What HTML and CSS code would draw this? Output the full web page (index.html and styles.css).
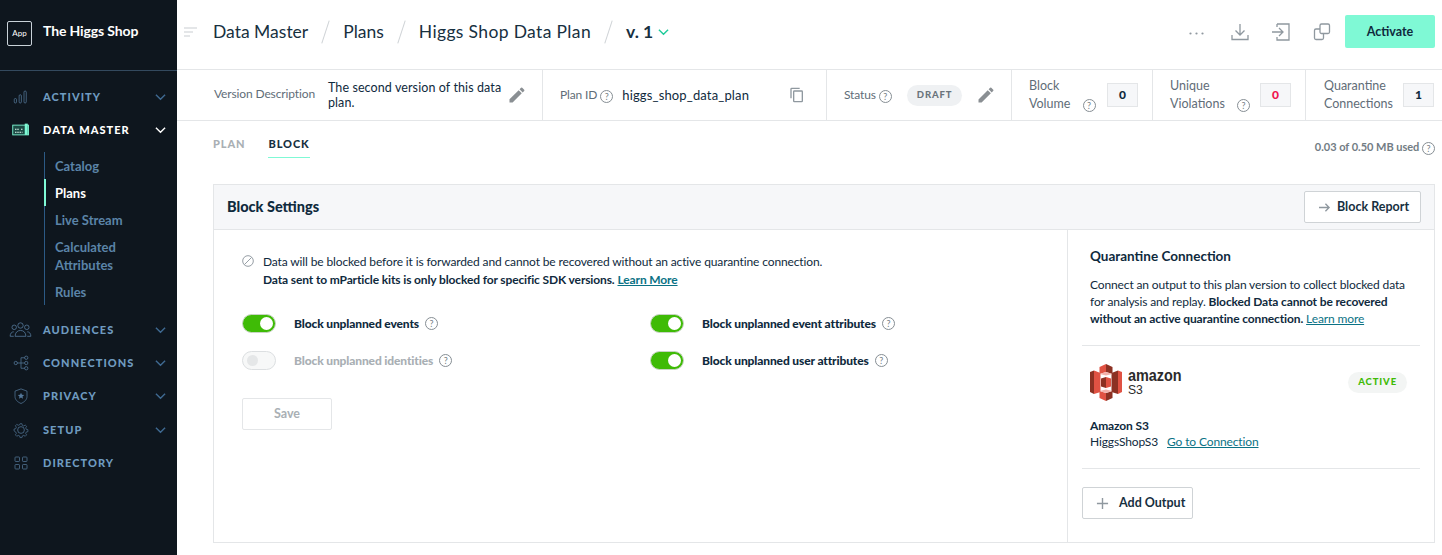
FILE: index.html
```html
<!DOCTYPE html>
<html lang="en">
<head>
    <meta charset="UTF-8">
    <meta name="viewport" content="width=device-width, initial-scale=1.0">
    <title>Higgs Shop Data Plan</title>
    <link rel="stylesheet" href="styles.css">
</head>
<body>
    <svg class="sprite" aria-hidden="true">
        <symbol id="pencil" viewBox="0 0 24 24"><path d="M3 17.25V21h3.75L17.81 9.94l-3.75-3.75L3 17.25zM20.71 7.04a1 1 0 0 0 0-1.41l-2.34-2.34a1 1 0 0 0-1.41 0l-1.83 1.83 3.75 3.75 1.83-1.83z" fill="currentColor"/></symbol>
        <symbol id="chevron" viewBox="0 0 12 8"><path d="M1 1.5l5 5 5-5" fill="none" stroke="currentColor" stroke-width="1.5"/></symbol>
    </svg>
    <div class="app">
        <aside class="sidebar">
            <div class="workspace">
                <span class="app-badge">App</span>
                <span class="workspace-name">The Higgs Shop</span>
            </div>
            <nav class="nav">
                <div class="nav-item">
                    <svg class="nav-icon" viewBox="0 0 24 24" fill="none" stroke="currentColor"><rect x="3" y="14" width="3" height="6" rx="1.5"/><rect x="9.5" y="9" width="3" height="11" rx="1.5"/><rect x="16" y="4" width="3" height="16" rx="1.5"/></svg>
                    <span class="nav-label">ACTIVITY</span>
                    <svg class="nav-chevron"><use href="#chevron"/></svg>
                </div>
                <div class="nav-item active">
                    <svg class="nav-icon" viewBox="0 0 24 24" fill="none"><rect x="1" y="5.5" width="21" height="13" fill="#1b4a44" stroke="#7ff9d5" stroke-width="1.2"/><rect x="17" y="3.5" width="4" height="15" fill="#7ff9d5"/><path d="M4 11h6M12 11h3M4 15h10" stroke="#e8fff8" stroke-width="1.6" stroke-dasharray="2 1"/></svg>
                    <span class="nav-label">DATA MASTER</span>
                    <svg class="nav-chevron"><use href="#chevron"/></svg>
                </div>
                <div class="subnav">
                    <span class="subnav-item">Catalog</span>
                    <span class="subnav-item current">Plans</span>
                    <span class="subnav-item">Live Stream</span>
                    <span class="subnav-item">Calculated Attributes</span>
                    <span class="subnav-item">Rules</span>
                </div>
                <div class="nav-item">
                    <svg class="nav-icon wide" viewBox="0 0 26 20" fill="none" stroke="currentColor" stroke-width=".9"><circle cx="13" cy="5" r="3"/><circle cx="6" cy="7" r="2.5"/><circle cx="20" cy="7" r="2.5"/><path d="M7 17c0-4 2.500-6.500 6-6.500s6 2.500 6 6.500zM5.500 17H1.500c0-3 1.500-5 4-5M20.500 17h4c0-3-1.500-5-4-5"/></svg>
                    <span class="nav-label">AUDIENCES</span>
                    <svg class="nav-chevron"><use href="#chevron"/></svg>
                </div>
                <div class="nav-item">
                    <svg class="nav-icon" viewBox="0 0 24 24" fill="none" stroke="currentColor"><circle cx="5" cy="12" r="2.200"/><circle cx="19" cy="5" r="2.200"/><circle cx="19" cy="12" r="2.200"/><circle cx="19" cy="19" r="2.200"/><path d="M7 12h10M12 5v14M12 5h5M12 19h5"/></svg>
                    <span class="nav-label">CONNECTIONS</span>
                    <svg class="nav-chevron"><use href="#chevron"/></svg>
                </div>
                <div class="nav-item">
                    <svg class="nav-icon" viewBox="0 0 24 24" fill="none" stroke="currentColor"><path d="M12 2.500l8 3v7c0 4.500-3.500 7.500-8 9.500-4.500-2-8-5-8-9.500v-7z"/><path d="M12 7.500l1.300 2.800 3 .3-2.300 2 .7 3-2.700-1.600-2.700 1.600.7-3-2.300-2 3-.3z" fill="currentColor" stroke="none"/></svg>
                    <span class="nav-label">PRIVACY</span>
                    <svg class="nav-chevron"><use href="#chevron"/></svg>
                </div>
                <div class="nav-item nav-setup">
                    <svg class="nav-icon" viewBox="0 0 24 24" fill="none" stroke="currentColor"><circle cx="12" cy="12" r="4.500"/><path d="M10.500 3h3l.5 2.500 2.200.9 2.200-1.400 2.100 2.100-1.400 2.200.9 2.200 2.500.5v3l-2.500.5-.9 2.200 1.400 2.200-2.100 2.100-2.200-1.400-2.200.9-.5 2.500h-3l-.5-2.500-2.200-.9-2.200 1.400-2.100-2.100 1.400-2.200-.9-2.200L1.500 14v-3l2.500-.5.900-2.200L3.500 6.100l2.100-2.100 2.200 1.400 2.200-.9z" transform="translate(12 12) scale(.88) translate(-12 -12.500)"/></svg>
                    <span class="nav-label">SETUP</span>
                    <svg class="nav-chevron"><use href="#chevron"/></svg>
                </div>
                <div class="nav-item">
                    <svg class="nav-icon" viewBox="0 0 24 24" fill="none" stroke="currentColor"><rect x="4" y="4" width="6" height="6" rx="1"/><rect x="14" y="4" width="6" height="6" rx="1"/><rect x="4" y="14" width="6" height="6" rx="1"/><rect x="14" y="14" width="6" height="6" rx="1"/></svg>
                    <span class="nav-label">DIRECTORY</span>
                </div>
            </nav>
        </aside>

        <main class="main">
            <header class="topbar">
                <svg class="menu-icon" viewBox="0 0 14 10" stroke="#c9ced2" stroke-width="1.200"><path d="M0 1h13M0 5h9M0 9h6"/></svg>
                <div class="crumbs">
                    <span>Data Master</span><i class="slash"></i>
                    <span>Plans</span><i class="slash"></i>
                    <span class="plan-name">Higgs Shop Data Plan</span><i class="slash"></i>
                    <span class="version">v. 1</span>
                    <svg class="version-chevron"><use href="#chevron"/></svg>
                </div>
                <div class="top-actions">
                    <svg class="dots" viewBox="0 0 15 3" fill="#8f989f"><circle cx="1.500" cy="1.500" r="1.100"/><circle cx="7.500" cy="1.500" r="1.100"/><circle cx="13.500" cy="1.500" r="1.100"/></svg>
                    <svg class="action-icon" viewBox="0 0 20 20" fill="none" stroke="#8f989f" stroke-width="1.300"><path d="M10 2v11M5.500 8.500L10 13l4.500-4.500M2 13v4.500h16V13"/></svg>
                    <svg class="action-icon" viewBox="0 0 20 20" fill="none" stroke="#8f989f" stroke-width="1.300"><path d="M1 10h11M8 6l4 4-4 4M6 2h12v16H6v-3M6 5V2"/></svg>
                    <svg class="action-icon last" viewBox="0 0 20 20" fill="none" stroke="#8f989f" stroke-width="1.300"><rect x="8" y="2" width="9.500" height="9.500" rx="1.500"/><path d="M8 7H4a1.500 1.500 0 0 0-1.500 1.500V16A1.500 1.500 0 0 0 4 17.500h6a1.500 1.500 0 0 0 1.500-1.500v-4.500"/></svg>
                    <button class="activate">Activate</button>
                </div>
            </header>

            <section class="info">
                <div class="cell cell-desc">
                    <span class="cell-label">Version Description</span>
                    <span class="cell-text">The second version of this data plan.</span>
                    <svg class="edit"><use href="#pencil"/></svg>
                </div>
                <div class="cell cell-id">
                    <span class="cell-label">Plan ID <i class="help">?</i></span>
                    <span class="cell-value">higgs_shop_data_plan</span>
                    <svg class="copy" viewBox="0 0 24 24" fill="#8f989f"><path d="M16 1H4a2 2 0 0 0-2 2v14h2V3h12V1zm3 4H8a2 2 0 0 0-2 2v14a2 2 0 0 0 2 2h11a2 2 0 0 0 2-2V7a2 2 0 0 0-2-2zm0 16H8V7h11v14z"/></svg>
                </div>
                <div class="cell cell-status">
                    <span class="cell-label">Status <i class="help">?</i></span>
                    <span class="pill">DRAFT</span>
                    <svg class="edit"><use href="#pencil"/></svg>
                </div>
                <div class="cell cell-stat">
                    <span class="stat-label">Block<br>Volume <i class="help">?</i></span>
                    <span class="count">0</span>
                </div>
                <div class="cell cell-stat">
                    <span class="stat-label">Unique<br>Violations <i class="help">?</i></span>
                    <span class="count red">0</span>
                </div>
                <div class="cell cell-stat">
                    <span class="stat-label">Quarantine<br>Connections</span>
                    <span class="count">1</span>
                </div>
            </section>

            <div class="content">
                <div class="tabs-row">
                    <div class="tabs">
                        <span class="tab">PLAN</span>
                        <span class="tab selected">BLOCK</span>
                    </div>
                    <span class="usage">0.03 of 0.50 MB used <i class="help">?</i></span>
                </div>

                <section class="card">
                    <div class="card-head">
                        <h2>Block Settings</h2>
                        <button class="btn btn-report">
                            <svg viewBox="0 0 14 12" fill="none" stroke="#8f989f" stroke-width="1.500"><path d="M1 6h11M8 2l4 4-4 4"/></svg>
                            Block Report
                        </button>
                    </div>
                    <div class="card-body">
                        <div class="settings">
                            <div class="notice">
                                <svg viewBox="0 0 14 14" fill="none" stroke="#8f989f" stroke-width="1.100"><circle cx="7" cy="7" r="6.200"/><path d="M2.800 11.200l8.400-8.400"/></svg>
                                <p>Data will be blocked before it is forwarded and cannot be recovered without an active quarantine connection.<br><strong>Data sent to mParticle kits is only blocked for specific SDK versions.</strong> <a href="#">Learn More</a></p>
                            </div>
                            <div class="toggles">
                                <label class="toggle-row"><span class="switch on"></span><b>Block unplanned events</b><i class="help">?</i></label>
                                <label class="toggle-row"><span class="switch on"></span><b>Block unplanned event attributes</b><i class="help">?</i></label>
                                <label class="toggle-row off"><span class="switch"></span><b>Block unplanned identities</b><i class="help">?</i></label>
                                <label class="toggle-row"><span class="switch on"></span><b>Block unplanned user attributes</b><i class="help">?</i></label>
                            </div>
                            <button class="btn btn-save">Save</button>
                        </div>
                        <aside class="quarantine">
                            <div class="q-intro">
                                <h3>Quarantine Connection</h3>
                                <p>Connect an output to this plan version to collect blocked data for analysis and replay. <strong>Blocked Data cannot be recovered without an active quarantine connection.</strong> <a href="#">Learn more</a></p>
                            </div>
                            <div class="q-output">
                                <div class="q-logo-row">
                                    <div class="s3-logo">
                                        <svg viewBox="0 0 32 37" width="32" height="37">
                                            <path d="M0 8l4-1.500V30L0 28z" fill="#8c3123"/>
                                            <path d="M4 6.500L10.500 9v19L4 30z" fill="#e05243"/>
                                            <path d="M32 8l-4-1.500V30l4-2z" fill="#e05243"/>
                                            <path d="M28 6.500L21.500 9v19l6.500 2z" fill="#8c3123"/>
                                            <path d="M16 0l-6.500 3v7l6.500-2z" fill="#e05243"/>
                                            <path d="M16 0l6.500 3v7L16 8z" fill="#8c3123"/>
                                            <path d="M16 13l-5 1.500v8l5 1.500z" fill="#8c3123"/>
                                            <path d="M16 13l5 1.500v8L16 24z" fill="#e05243"/>
                                            <path d="M16 37l-6.500-3v-7l6.500 2z" fill="#e05243"/>
                                            <path d="M16 37l6.500-3v-7L16 29z" fill="#8c3123"/>
                                            <path d="M16 8l-6.500 2 6.500 1.500 6.500-1.500zM16 29l-6.500-2 6.500-1.500 6.500 1.500z" fill="#f2b0a9"/>
                                        </svg>
                                        <div class="s3-word"><b>amazon</b><span>S3</span></div>
                                    </div>
                                    <span class="pill pill-active">ACTIVE</span>
                                </div>
                                <div class="q-name">
                                    <strong>Amazon S3</strong>
                                    <span>HiggsShopS3 <a href="#">Go to Connection</a></span>
                                </div>
                            </div>
                            <button class="btn btn-add">
                                <svg viewBox="0 0 14 14" stroke="#8f989f" stroke-width="1.500"><path d="M7 1v12M1 7h12"/></svg>
                                Add Output
                            </button>
                        </aside>
                    </div>
                </section>
            </div>
        </main>
    </div>
</body>
</html>
```

FILE: styles.css
```css
* {
    box-sizing: border-box;
}
body {
    margin: 0;
    font-family: Lato, "Open Sans", Arial, sans-serif;
    font-size: 12px;
    letter-spacing: -.13px;
    color: #0f2a3d;
    background: #fff;
}
.sprite {
    display: none;
}
.app {
    display: flex;
    width: 1442px;
    height: 555px;
    overflow: hidden;
}

/* sidebar */
.sidebar {
    width: 177px;
    flex: none;
    background: #0e161e;
    color: #fff;
}
.workspace {
    height: 71px;
    padding: 21px 0 0 7px;
    display: flex;
    align-items: flex-start;
    gap: 11px;
    border-bottom: 1px solid #33495e;
}
.app-badge {
    width: 25px;
    height: 25px;
    border: 1px solid #c9d2d9;
    border-radius: 2px;
    font-size: 8px;
    letter-spacing: 0;
    line-height: 23px;
    text-align: center;
}
.workspace-name {
    font-size: 14px;
    font-weight: 700;
    line-height: 20px;
}
.nav {
    padding-top: 9px;
}
.nav-item {
    height: 33px;
    display: flex;
    align-items: center;
    color: #6f9bc0;
    position: relative;
}
.nav-setup {
    margin-top: 1px;
}
.nav-icon {
    width: 18px;
    height: 18px;
    margin-left: 12px;
    margin-right: 13px;
    flex: none;
    color: #54789a;
}
.nav-icon.wide {
    width: 25px;
    margin-left: 8px;
    margin-right: 10px;
}
.nav-label {
    font-size: 11px;
    font-weight: 900;
    letter-spacing: 1.05px;
}
.nav-chevron {
    position: absolute;
    left: 155px;
    top: 13px;
    width: 11px;
    height: 8px;
    color: #3f6a92;
}
.nav-item.active,
.nav-item.active .nav-chevron {
    color: #fff;
}
.subnav {
    margin: 6px 0 8px 44px;
    width: 125px;
    border-left: 1px solid #2c5a85;
    display: flex;
    flex-direction: column;
}
.subnav-item {
    padding: 5px 10px 4px 9px;
    margin-left: -1px;
    border-left: 2px solid transparent;
    font-size: 13px;
    font-weight: 700;
    letter-spacing: 0;
    line-height: 18px;
    color: #5b84a8;
}
.subnav-item.current {
    color: #fff;
    border-left-color: #7ff9d5;
}

/* top bar */
.main {
    flex: 1;
    min-width: 0;
    display: flex;
    flex-direction: column;
}
.topbar {
    height: 70px;
    flex: none;
    display: flex;
    align-items: center;
    padding: 0 7px 6px 7px;
    border-bottom: 1px solid #e4e6e8;
}
.menu-icon {
    width: 14px;
    height: 10px;
    flex: none;
}
.crumbs {
    display: flex;
    align-items: center;
    margin-left: 15px;
    font-size: 17.500px;
    letter-spacing: 0;
    color: #17303f;
}
.slash {
    width: 1px;
    height: 24px;
    margin: 0 17px;
    background: #cfd3d6;
    transform: rotate(18deg);
}
.plan-name {
    letter-spacing: .35px;
}
.version {
    font-weight: 700;
}
.version-chevron {
    width: 11px;
    height: 8px;
    margin-left: 5px;
    color: #1ecb9a;
}
.top-actions {
    margin-left: auto;
    display: flex;
    align-items: center;
}
.dots {
    width: 15px;
    height: 3px;
    margin: 3px 26px 0 0;
}
.action-icon {
    width: 20px;
    height: 20px;
    margin-right: 21px;
}
.action-icon.last {
    margin-right: 13px;
}
.activate {
    width: 90px;
    height: 33px;
    border: 0;
    border-radius: 2px;
    background: #7ff9d5;
    color: #0f2a3d;
    font: 700 12.5px Lato, sans-serif;
}

/* info strip */
.info {
    height: 51px;
    flex: none;
    display: grid;
    grid-template-columns: 366px 284px 185px 141px 153px 136px;
    border-bottom: 1px solid #e4e6e8;
}
.cell {
    display: flex;
    align-items: center;
    border-right: 1px solid #e4e6e8;
    padding-left: 17px;
}
.cell:last-child {
    border-right: 0;
    padding-left: 18px;
}
.cell-desc {
    padding-left: 37px;
}
.cell-label {
    padding-bottom: 1px;
    color: #5f6d78;
    white-space: nowrap;
}
.cell-desc .cell-label {
    padding-bottom: 3px;
}
.cell-text {
    width: 180px;
    margin-left: 13px;
    line-height: 15px;
    font-size: 12.500px;
    letter-spacing: .1px;
}
.cell-value {
    margin-left: 9px;
    font-size: 13px;
    letter-spacing: .15px;
}
.edit {
    width: 20px;
    height: 20px;
    margin-left: auto;
    margin-right: 15px;
    color: #8a8f93;
}
.copy {
    width: 16px;
    height: 16px;
    margin-left: auto;
    margin-right: 21px;
}
.help {
    display: inline-block;
    width: 13px;
    height: 13px;
    border: 1px solid #868e94;
    border-radius: 50%;
    color: #767f86;
    font-size: 9px;
    font-style: normal;
    font-weight: 400;
    letter-spacing: 0;
    line-height: 11px;
    text-align: center;
    vertical-align: -1px;
}
.pill {
    display: inline-block;
    height: 21px;
    padding: 0 10px;
    margin-left: 15px;
    border-radius: 11px;
    background: #eff1f3;
    color: #6a747c;
    font-size: 9.5px;
    font-weight: 900;
    letter-spacing: .9px;
    line-height: 20px;
}
.stat-label {
    padding-bottom: 1px;
    color: #5f6d78;
    font-size: 12.500px;
    letter-spacing: 0;
    line-height: 18px;
    white-space: nowrap;
}
.stat-label .help {
    margin-left: 9px;
}
.count {
    width: 31px;
    height: 24px;
    margin-left: auto;
    margin-right: 14px;
    background: #f6f7f9;
    border: 1px solid #e4e6e8;
    font-size: 12px;
    font-weight: 900;
    line-height: 22px;
    text-align: center;
}
.count.red {
    color: #f0144f;
}
.cell:last-child .count {
    margin-right: 8px;
}

/* tabs + card */
.content {
    padding: 0 7px 0 36px;
}
.tabs-row {
    height: 63px;
    display: flex;
    justify-content: space-between;
}
.tabs {
    display: flex;
    gap: 23px;
    height: 37px;
}
.tab {
    padding-top: 16px;
    font-size: 11px;
    font-weight: 900;
    letter-spacing: .9px;
    color: #a9afb4;
}
.tab.selected {
    color: #17303f;
    border-bottom: 1px solid #7ff9d5;
}
.usage {
    padding-top: 19px;
    font-size: 11px;
    font-weight: 700;
    letter-spacing: -.02px;
    color: #727c84;
}
.card {
    border: 1px solid #e4e6e8;
    height: 359px;
}
.card-head {
    height: 45px;
    display: flex;
    align-items: center;
    justify-content: space-between;
    padding: 0 13px 0 13px;
    background: #f6f7f9;
    border-bottom: 1px solid #e4e6e8;
}
h2 {
    margin: 0;
    padding-bottom: 2px;
    font-size: 14.5px;
    font-weight: 900;
    letter-spacing: 0;
}
.btn {
    display: inline-flex;
    align-items: center;
    padding-bottom: 2px;
    background: #fff;
    border: 1px solid #cfd3d6;
    border-radius: 2px;
    font: 700 12.5px Lato, sans-serif;
    color: #17303f;
    white-space: nowrap;
}
.btn-report {
    width: 117px;
    height: 32px;
    padding-left: 13px;
    gap: 6px;
}
.btn-report svg {
    width: 13px;
    height: 11px;
    margin-top: 2px;
}
.card-body {
    height: 312px;
    display: flex;
}
.settings {
    width: 854px;
    flex: none;
    padding: 23px 0 0 28px;
    border-right: 1px solid #e4e6e8;
}
.notice {
    display: flex;
    gap: 9px;
}
.notice svg {
    width: 12px;
    height: 12px;
    margin-top: 2px;
    flex: none;
}
.notice p {
    margin: 0;
    line-height: 18px;
}
a {
    color: #0b7285;
    text-decoration: underline;
}
.notice a {
    font-weight: 700;
}
.toggles {
    display: grid;
    grid-template-columns: 408px 1fr;
    row-gap: 17px;
    margin-top: 24px;
}
.toggle-row {
    height: 20px;
    display: flex;
    align-items: center;
}
.toggle-row b {
    font-weight: 900;
    margin-right: 6px;
}
.toggle-row.off b {
    color: #a9afb4;
}
.switch {
    width: 34px;
    height: 19px;
    margin-right: 18px;
    flex: none;
    border-radius: 10px;
    border: 1px solid #dcdfe1;
    background: #f7f8f8;
    position: relative;
}
.switch::after {
    content: "";
    position: absolute;
    left: 4px;
    top: 3px;
    width: 11px;
    height: 11px;
    border-radius: 50%;
    background: #e5e7e8;
}
.switch.on {
    background: #3fbb06;
    border-color: #c8d4c4;
}
.switch.on::after {
    left: 17px;
    top: 2px;
    width: 13px;
    height: 13px;
    background: #fff;
}
.btn-save {
    width: 90px;
    height: 32px;
    margin-top: 28px;
    justify-content: center;
    border-color: #e4e6e8;
    color: #a9afb4;
}
.quarantine {
    flex: 1;
    padding: 0 14px;
}
.q-intro {
    height: 116px;
    padding: 18px 0 0 8px;
    border-bottom: 1px solid #e4e6e8;
}
h3 {
    margin: 0 0 12px;
    font-size: 13.500px;
    font-weight: 700;
    letter-spacing: 0;
}
.q-intro p {
    margin: 0;
    line-height: 17px;
}
.q-output {
    height: 123px;
    padding: 18px 0 0 8px;
    border-bottom: 1px solid #e4e6e8;
}
.q-logo-row {
    display: flex;
    align-items: center;
    justify-content: space-between;
    padding-right: 13px;
}
.s3-logo {
    display: flex;
    align-items: center;
    gap: 6px;
}
.s3-word {
    display: flex;
    flex-direction: column;
    font-family: "Liberation Sans", Arial, sans-serif;
    letter-spacing: 0;
    color: #2b2b2b;
    transform: scaleX(.9);
    transform-origin: left center;
}
.s3-word b {
    font-size: 16px;
    line-height: 14px;
}
.s3-word span {
    font-size: 13.500px;
    line-height: 13px;
}
.pill-active {
    margin-left: 0;
    color: #3fbb06;
    background: #f3f5f4;
}
.q-name {
    margin-top: 17px;
    line-height: 16px;
    display: flex;
    flex-direction: column;
}
.q-name a {
    margin-left: 6px;
}
.btn-add {
    width: 111px;
    height: 32px;
    margin-top: 18px;
    padding-left: 13px;
    gap: 10px;
}
.btn-add svg {
    width: 13px;
    height: 13px;
    margin-top: 2px;
}
```
